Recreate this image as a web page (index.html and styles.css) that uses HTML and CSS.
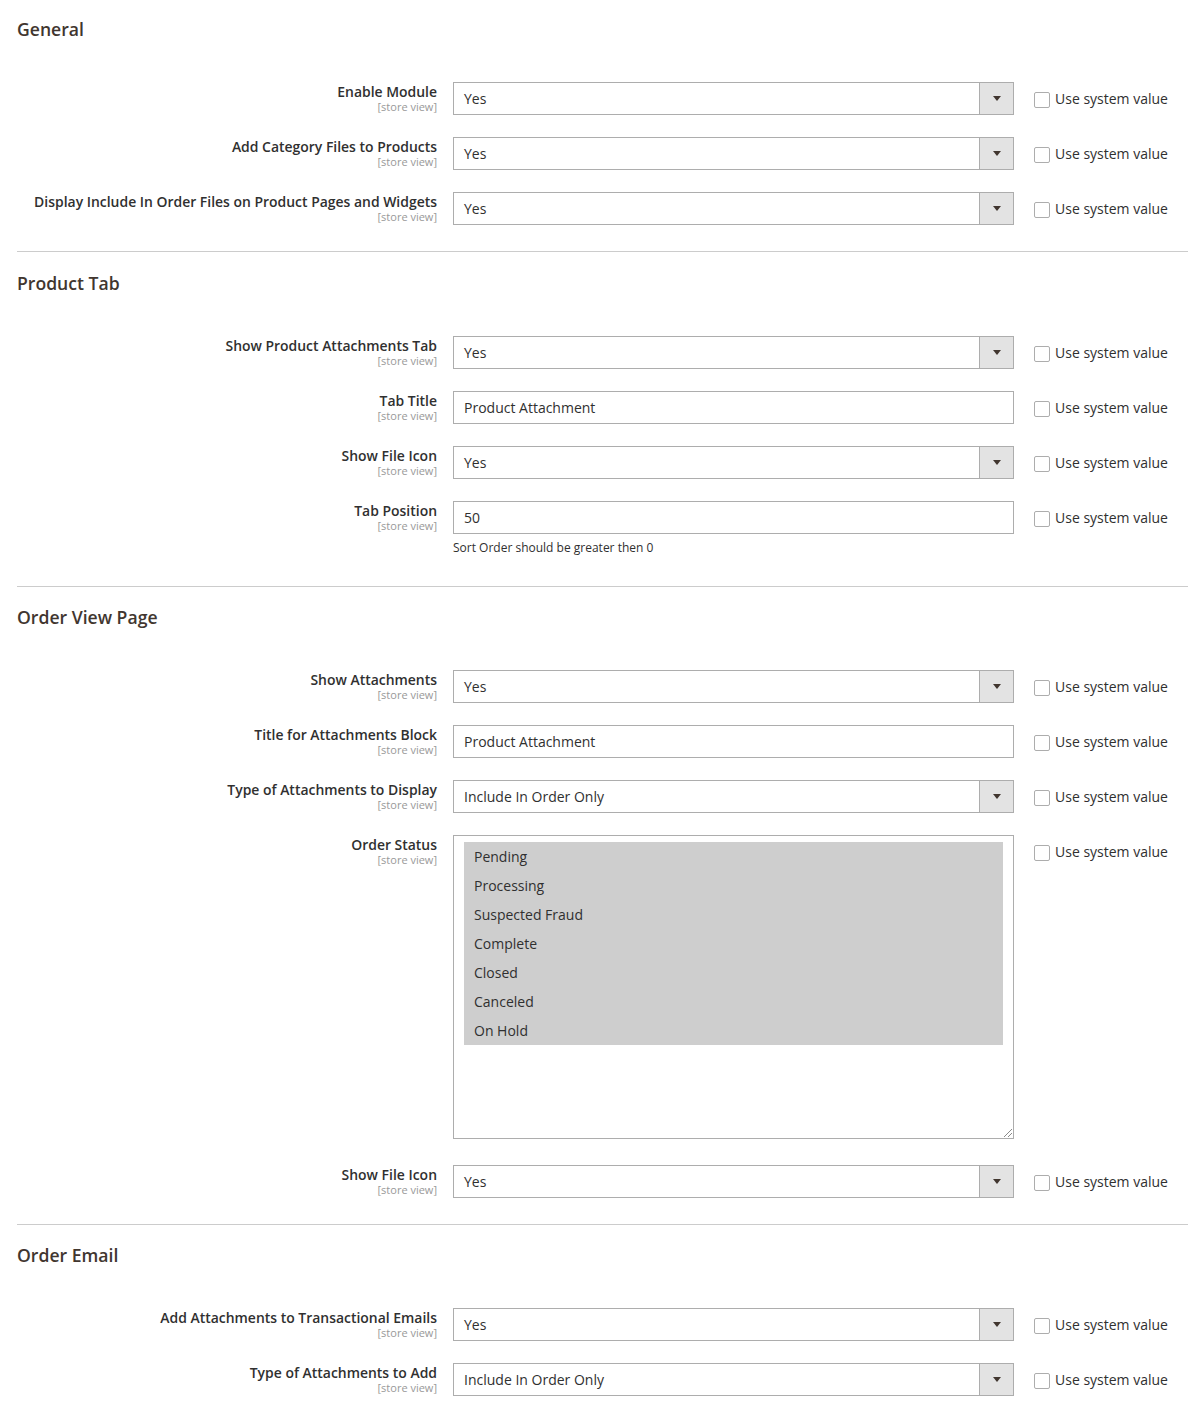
FILE: index.html
```
<!DOCTYPE html>
<html lang="en">
<head>
<meta charset="utf-8">
<title>Configuration</title>
<link rel="stylesheet" href="styles.css">
</head>
<body>
<div class="page">

  <section class="section section-first">
    <h2 class="section-title">General</h2>
    <div class="fields">
      <div class="row">
        <div class="label"><span class="label-text">Enable Module</span><span class="scope">[store view]</span></div>
        <div class="value"><div class="select"><span class="select-value">Yes</span><span class="select-btn"><span class="arrow"></span></span></div></div>
        <div class="use-default"><span class="checkbox"></span><span class="use-text">Use system value</span></div>
      </div>
      <div class="row">
        <div class="label"><span class="label-text">Add Category Files to Products</span><span class="scope">[store view]</span></div>
        <div class="value"><div class="select"><span class="select-value">Yes</span><span class="select-btn"><span class="arrow"></span></span></div></div>
        <div class="use-default"><span class="checkbox"></span><span class="use-text">Use system value</span></div>
      </div>
      <div class="row">
        <div class="label"><span class="label-text">Display Include In Order Files on Product Pages and Widgets</span><span class="scope">[store view]</span></div>
        <div class="value"><div class="select"><span class="select-value">Yes</span><span class="select-btn"><span class="arrow"></span></span></div></div>
        <div class="use-default"><span class="checkbox"></span><span class="use-text">Use system value</span></div>
      </div>
    </div>
  </section>
  <hr class="divider">

  <section class="section">
    <h2 class="section-title">Product Tab</h2>
    <div class="fields">
      <div class="row">
        <div class="label"><span class="label-text">Show Product Attachments Tab</span><span class="scope">[store view]</span></div>
        <div class="value"><div class="select"><span class="select-value">Yes</span><span class="select-btn"><span class="arrow"></span></span></div></div>
        <div class="use-default"><span class="checkbox"></span><span class="use-text">Use system value</span></div>
      </div>
      <div class="row">
        <div class="label"><span class="label-text">Tab Title</span><span class="scope">[store view]</span></div>
        <div class="value"><div class="input">Product Attachment</div></div>
        <div class="use-default"><span class="checkbox"></span><span class="use-text">Use system value</span></div>
      </div>
      <div class="row">
        <div class="label"><span class="label-text">Show File Icon</span><span class="scope">[store view]</span></div>
        <div class="value"><div class="select"><span class="select-value">Yes</span><span class="select-btn"><span class="arrow"></span></span></div></div>
        <div class="use-default"><span class="checkbox"></span><span class="use-text">Use system value</span></div>
      </div>
      <div class="row">
        <div class="label"><span class="label-text">Tab Position</span><span class="scope">[store view]</span></div>
        <div class="value"><div class="input">50</div><p class="note">Sort Order should be greater then 0</p></div>
        <div class="use-default"><span class="checkbox"></span><span class="use-text">Use system value</span></div>
      </div>
    </div>
  </section>
  <hr class="divider">

  <section class="section">
    <h2 class="section-title">Order View Page</h2>
    <div class="fields">
      <div class="row">
        <div class="label"><span class="label-text">Show Attachments</span><span class="scope">[store view]</span></div>
        <div class="value"><div class="select"><span class="select-value">Yes</span><span class="select-btn"><span class="arrow"></span></span></div></div>
        <div class="use-default"><span class="checkbox"></span><span class="use-text">Use system value</span></div>
      </div>
      <div class="row">
        <div class="label"><span class="label-text">Title for Attachments Block</span><span class="scope">[store view]</span></div>
        <div class="value"><div class="input">Product Attachment</div></div>
        <div class="use-default"><span class="checkbox"></span><span class="use-text">Use system value</span></div>
      </div>
      <div class="row">
        <div class="label"><span class="label-text">Type of Attachments to Display</span><span class="scope">[store view]</span></div>
        <div class="value"><div class="select"><span class="select-value">Include In Order Only</span><span class="select-btn"><span class="arrow"></span></span></div></div>
        <div class="use-default"><span class="checkbox"></span><span class="use-text">Use system value</span></div>
      </div>
      <div class="row row-multi">
        <div class="label"><span class="label-text">Order Status</span><span class="scope">[store view]</span></div>
        <div class="value">
          <div class="multiselect">
            <ul class="options">
              <li>Pending</li>
              <li>Processing</li>
              <li>Suspected Fraud</li>
              <li>Complete</li>
              <li>Closed</li>
              <li>Canceled</li>
              <li>On Hold</li>
            </ul>
            <svg class="grip" width="9" height="9" viewBox="0 0 9 9"><line x1="1" y1="9" x2="9" y2="1" stroke="#8a8a8a" stroke-width="1"/><line x1="5" y1="9" x2="9" y2="5" stroke="#8a8a8a" stroke-width="1"/></svg>
          </div>
        </div>
        <div class="use-default"><span class="checkbox"></span><span class="use-text">Use system value</span></div>
      </div>
      <div class="row">
        <div class="label"><span class="label-text">Show File Icon</span><span class="scope">[store view]</span></div>
        <div class="value"><div class="select"><span class="select-value">Yes</span><span class="select-btn"><span class="arrow"></span></span></div></div>
        <div class="use-default"><span class="checkbox"></span><span class="use-text">Use system value</span></div>
      </div>
    </div>
  </section>
  <hr class="divider">

  <section class="section">
    <h2 class="section-title">Order Email</h2>
    <div class="fields">
      <div class="row">
        <div class="label"><span class="label-text">Add Attachments to Transactional Emails</span><span class="scope">[store view]</span></div>
        <div class="value"><div class="select"><span class="select-value">Yes</span><span class="select-btn"><span class="arrow"></span></span></div></div>
        <div class="use-default"><span class="checkbox"></span><span class="use-text">Use system value</span></div>
      </div>
      <div class="row">
        <div class="label"><span class="label-text">Type of Attachments to Add</span><span class="scope">[store view]</span></div>
        <div class="value"><div class="select"><span class="select-value">Include In Order Only</span><span class="select-btn"><span class="arrow"></span></span></div></div>
        <div class="use-default"><span class="checkbox"></span><span class="use-text">Use system value</span></div>
      </div>
    </div>
  </section>

</div>
</body>
</html>
```
FILE: styles.css
```
* {
  box-sizing: border-box;
}

html, body {
  margin: 0;
  padding: 0;
  background: #ffffff;
}

body {
  font-family: "Open Sans", "Liberation Sans", sans-serif;
  color: #303030;
  font-size: 14px;
}

.page {
  padding-left: 17px;
}

.section {
  padding-top: 19.5px;
}

.section-first {
  padding-top: 18px;
}

.section-title {
  margin: 0 0 42px 0;
  font-size: 17.6px;
  line-height: 22px;
  font-weight: 600;
  color: #41362f;
}

.fields {
  display: flex;
  flex-direction: column;
  gap: 22px;
  padding-bottom: 26px;
}

.row {
  display: grid;
  grid-template-columns: 420px 561px auto;
  column-gap: 16px;
  align-items: start;
}

.row-multi {
  margin-bottom: 3.5px;
}

.label {
  display: flex;
  flex-direction: column;
  align-items: flex-end;
  text-align: right;
}

.label-text {
  font-size: 13.95px;
  font-weight: 600;
  line-height: 19px;
  color: #303030;
}

.scope {
  font-size: 11px;
  line-height: 12px;
  color: #999999;
}

.value {
  width: 561px;
}

.select {
  display: flex;
  height: 33px;
  border: 1px solid #adadad;
  background: #ffffff;
}

.select-value {
  flex: 1;
  padding: 0 10px;
  line-height: 31px;
  font-size: 14px;
  color: #303030;
}

.select-btn {
  width: 34px;
  background: #e3e3e3;
  border-left: 1px solid #adadad;
  display: flex;
  align-items: center;
  justify-content: center;
}

.arrow {
  width: 0;
  height: 0;
  border-left: 4px solid transparent;
  border-right: 4px solid transparent;
  border-top: 5px solid #41362f;
  margin-left: 1px;
}

.input {
  height: 33px;
  border: 1px solid #adadad;
  padding: 0 10px;
  line-height: 31px;
  font-size: 14px;
  color: #303030;
  background: #ffffff;
}

.note {
  margin: 6px 0 0 0;
  font-size: 12px;
  line-height: 16px;
  color: #303030;
  padding-bottom: 4px;
}

.multiselect {
  position: relative;
  height: 304px;
  border: 1px solid #adadad;
  padding: 6px 10px;
  background: #ffffff;
}

.options {
  list-style: none;
  margin: 0;
  padding: 0;
  background: #cecece;
}

.options li {
  height: 29px;
  line-height: 29px;
  padding: 0 10px;
  font-size: 14px;
  color: #303030;
}

.grip {
  position: absolute;
  right: 1px;
  bottom: 1px;
}

.use-default {
  display: flex;
  align-items: center;
  gap: 5px;
  padding-left: 4px;
  height: 33px;
}

.checkbox {
  width: 16px;
  height: 16px;
  border: 1px solid #adadad;
  border-radius: 2px;
  background: #ffffff;
  margin-top: 3px;
}

.use-text {
  font-size: 14px;
  color: #303030;
  line-height: 19px;
}

.divider {
  margin: 0;
  border: 0;
  border-top: 1px solid #cccccc;
  height: 0;
}
```
